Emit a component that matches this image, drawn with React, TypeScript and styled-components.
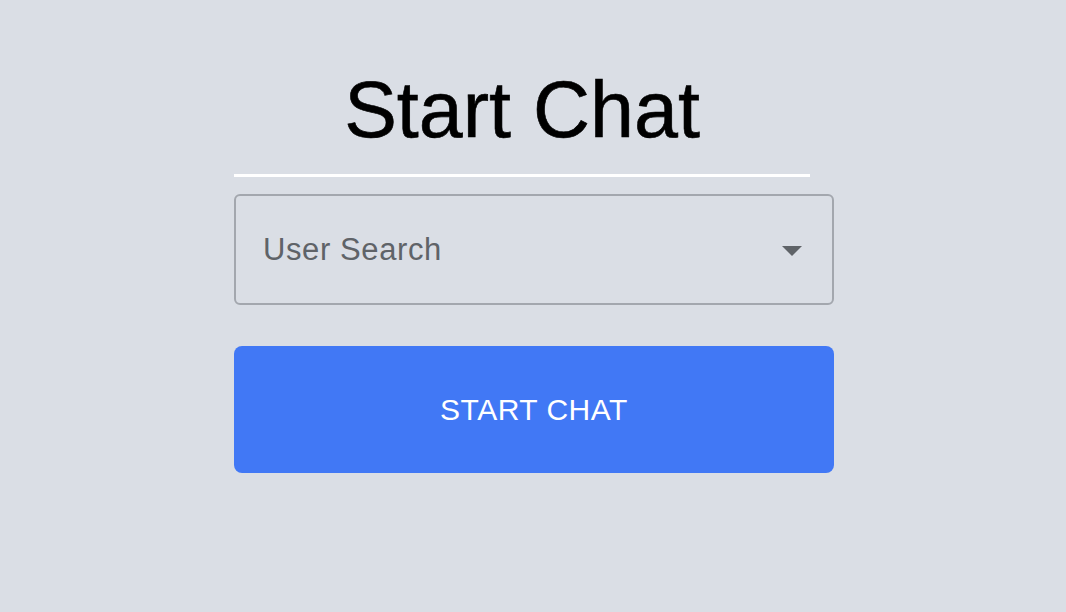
import React from "react";
import styled, { createGlobalStyle } from "styled-components";

const Global = createGlobalStyle`
  html, body {
    margin: 0;
    padding: 0;
    background: #dadee5;
    font-family: "Liberation Sans", Arial, sans-serif;
  }
  #root { min-height: 612px; }
`;

const Page = styled.div`
  display: flex;
  justify-content: center;
  padding: 71px 0 0 2px;
  min-height: 612px;
  box-sizing: border-box;
  background: #dadee5;
`;

const Panel = styled.div`
  width: 600px;
  display: flex;
  flex-direction: column;
`;

const Title = styled.h1`
  width: 576px;
  margin: 0;
  font-size: 79px;
  line-height: 78px;
  font-weight: 400;
  color: #000;
  text-align: center;
  -webkit-text-stroke: 0.6px #000;
`;

const Divider = styled.div`
  width: 576px;
  height: 3px;
  background: #ffffff;
  margin-top: 25px;
`;

const Select = styled.div`
  margin-top: 17px;
  height: 111px;
  box-sizing: border-box;
  border: 2px solid #a3a7ae;
  border-radius: 6px;
  display: flex;
  align-items: center;
  justify-content: space-between;
  padding: 0 30px 0 27px;
  cursor: pointer;
`;

const Placeholder = styled.span`
  font-size: 31px;
  letter-spacing: 0.6px;
  color: #5f6368;
`;

const Caret = styled.svg`
  width: 20px;
  height: 10px;
  display: block;
  margin-top: 2px;
`;

const Button = styled.button`
  margin-top: 41px;
  height: 127px;
  border: none;
  border-radius: 8px;
  background: #4178f5;
  color: #ffffff;
  font-family: "Liberation Sans", Arial, sans-serif;
  font-size: 30px;
  letter-spacing: 0.5px;
  text-transform: uppercase;
  cursor: pointer;
  padding: 0;
`;

export default function App() {
  return (
    <>
      <Global />
      <Page>
        <Panel>
          <Title>Start Chat</Title>
          <Divider />
          <Select>
            <Placeholder>User Search</Placeholder>
            <Caret viewBox="0 0 20 10">
              <path d="M0 0 L20 0 L10 10 Z" fill="#5f6368" />
            </Caret>
          </Select>
          <Button>Start Chat</Button>
        </Panel>
      </Page>
    </>
  );
}
